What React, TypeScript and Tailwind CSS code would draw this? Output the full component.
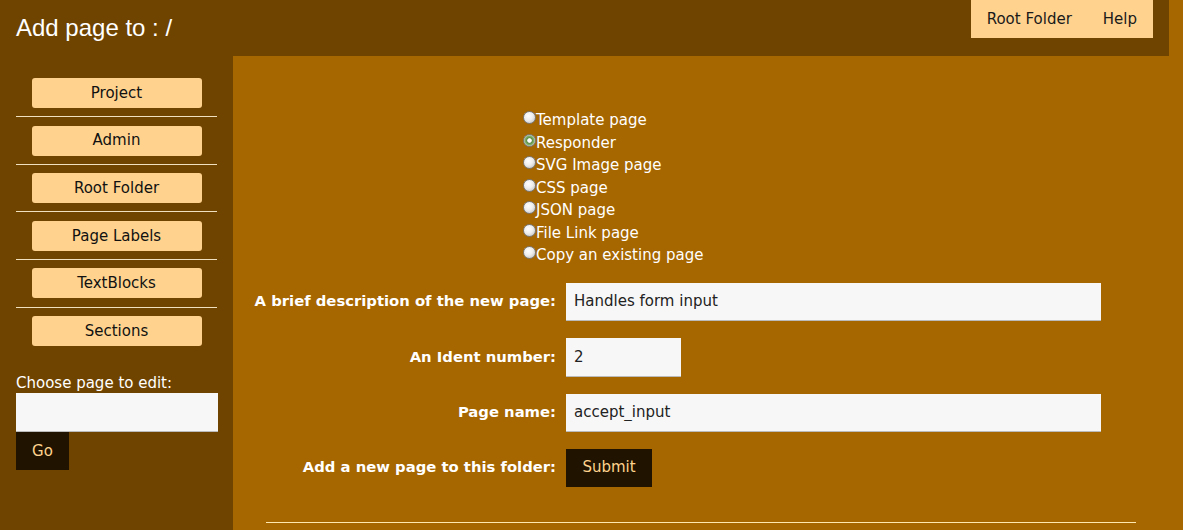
import React from "react";

const menu = ["Project", "Admin", "Root Folder", "Page Labels", "TextBlocks", "Sections"];

const pageTypes = [
  "Template page",
  "Responder",
  "SVG Image page",
  "CSS page",
  "JSON page",
  "File Link page",
  "Copy an existing page",
];

const body = { fontFamily: '"DejaVu Sans", Verdana, sans-serif' };

function Field({ label, children }: { label: string; children: React.ReactNode }) {
  return (
    <div className="flex items-center">
      <label className="w-[333px] pr-[10px] text-right font-bold text-white text-[14.8px] whitespace-nowrap">
        {label}
      </label>
      {children}
    </div>
  );
}

export default function App() {
  return (
    <div className="min-h-[530px] bg-[#a66600]" style={body}>
      <div className="w-[1169px]">
        <header className="h-[56px] bg-[#6f4400] flex items-start justify-between">
          <h1
            className="pl-4 pt-[13px] text-[24px] text-white leading-[30px]"
            style={{ fontFamily: '"Liberation Sans", Arial, sans-serif' }}
          >
            Add page to : /
          </h1>
          <nav className="mr-4 h-[38px] bg-[#ffd38e] flex items-center gap-[31px] px-4 text-[15px] text-[#1a1a1a]">
            <a>Root Folder</a>
            <a>Help</a>
          </nav>
        </header>

        <div className="flex min-h-[474px]">
          <aside className="w-[233px] bg-[#6f4400] px-4 pt-[22px]">
            <ul>
              {menu.map((m, i) => (
                <li
                  key={m}
                  className={`py-[8.3px] ${i < menu.length - 1 ? "border-b border-[#f0e0c0]" : ""} ${i === 0 ? "pt-0" : ""}`}
                >
                  <button className="mx-auto block w-[170px] h-[30px] rounded-[3px] bg-[#ffd38e] text-[15px] text-[#111]">
                    {m}
                  </button>
                </li>
              ))}
            </ul>
            <div className="mt-[19px] text-[15px] text-white leading-[20px]">Choose page to edit:</div>
            <input className="block w-[202px] h-[39px] bg-[#f7f7f7] border-b border-[#bbb] outline-none" />
            <button className="block w-[53px] h-[38px] bg-[#201400] text-[#ffd38e] text-[15px]">Go</button>
          </aside>

          <main className="flex-1 pt-[53px] pb-[7px] flex flex-col">
            <div className="ml-[290px] flex flex-col text-[15px] text-white leading-[22.5px]">
              {pageTypes.map((t, i) => (
                <label key={t} className="flex items-center">
                  <input
                    type="radio"
                    name="ptype"
                    defaultChecked={i === 1}
                    className="appearance-none shrink-0 m-0 -mt-[5px] w-[13px] h-[13px] rounded-full border border-[#7a7a7a] bg-[radial-gradient(circle_at_40%_35%,#ffffff_0%,#eeeeee_45%,#b8b8b8_100%)] checked:bg-[radial-gradient(circle,#ffffff_0%,#ffffff_24%,#5a8a45_34%,#86b570_58%,#cfcfcf_72%,#b0b0b0_100%)]"
                  />
                  {t}
                </label>
              ))}
            </div>

            <div className="mt-[16px] flex flex-col gap-[17px]">
              <Field label="A brief description of the new page:">
                <input
                  defaultValue="Handles form input"
                  className="w-[535px] h-[38px] px-2 bg-[#f7f7f7] border-b border-[#bbb] text-[15px] text-[#222] outline-none"
                />
              </Field>
              <Field label="An Ident number:">
                <input
                  defaultValue="2"
                  className="w-[115px] h-[39px] px-2 bg-[#f7f7f7] border-b border-[#bbb] text-[15px] text-[#222] outline-none"
                />
              </Field>
              <Field label="Page name:">
                <input
                  defaultValue="accept_input"
                  className="w-[535px] h-[38px] px-2 bg-[#f7f7f7] border-b border-[#bbb] text-[15px] text-[#222] outline-none"
                />
              </Field>
              <Field label="Add a new page to this folder:">
                <button className="w-[86px] h-[38px] bg-[#201400] text-[#ffd38e] text-[15px]">Submit</button>
              </Field>
            </div>

            <hr className="mt-auto mx-[33px] border-t border-[#ffe7b0]" />
          </main>
        </div>
      </div>
    </div>
  );
}
